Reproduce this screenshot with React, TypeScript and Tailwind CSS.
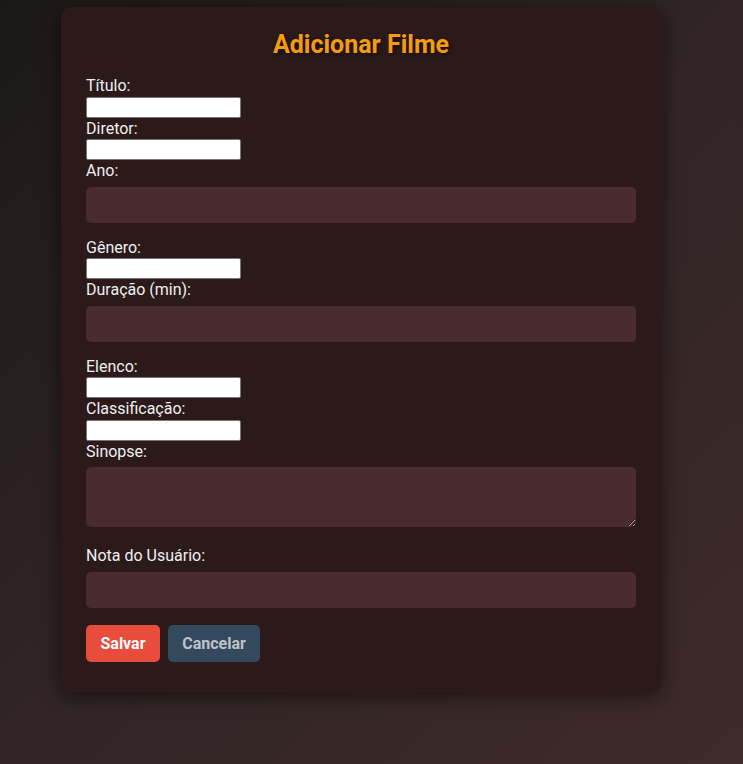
import React from "react";

const font = { fontFamily: "Roboto, 'Noto Sans', sans-serif" };

function Label({ children }: { children: React.ReactNode }) {
  return <label className="block text-[16px] leading-[21.5px] text-[#ecf0f1]">{children}</label>;
}

function PlainInput() {
  return <input type="text" className="block w-[155px] h-[21px] bg-white border border-[#767676] rounded-[2px] text-[13px] text-black outline-none" />;
}

function StyledInput() {
  return <input type="number" className="block w-full h-[36px] mt-[5px] mb-[14px] rounded-[5px] bg-[#4a2c2e] px-[10px] text-[#ecf0f1] outline-none" />;
}

export default function App() {
  return (
    <div style={font} className="min-h-screen bg-[linear-gradient(135deg,#1c1818_0%,#312525_50%,#3f2a2a_100%)] pt-[7px] pb-[20px]">
      <div className="ml-[61px] w-[600px] rounded-[10px] bg-[#2c1a1b] px-[25px] pt-[22px] pb-[30px] shadow-[0_4px_20px_rgba(0,0,0,0.55)]">
        <h2 className="mb-[14px] text-center text-[25px] font-bold leading-[32px] text-[#f39c12] [text-shadow:2px_2px_4px_rgba(0,0,0,0.5)]">
          Adicionar Filme
        </h2>
        <form className="flex flex-col" onSubmit={(e) => e.preventDefault()}>
          <Label>Título:</Label>
          <PlainInput />
          <Label>Diretor:</Label>
          <PlainInput />
          <Label>Ano:</Label>
          <StyledInput />
          <Label>Gênero:</Label>
          <PlainInput />
          <Label>Duração (min):</Label>
          <StyledInput />
          <Label>Elenco:</Label>
          <PlainInput />
          <Label>Classificação:</Label>
          <PlainInput />
          <Label>Sinopse:</Label>
          <textarea className="block w-full h-[60px] mt-[5px] mb-[18px] rounded-[5px] bg-[#4a2c2e] px-[10px] py-[8px] text-[#ecf0f1] outline-none" />
          <Label>Nota do Usuário:</Label>
          <StyledInput />
          <div className="mt-[3.5px] flex gap-[8px]">
            <button type="submit" className="h-[37px] w-[74px] rounded-[5px] bg-[#e74c3c] text-[16px] font-bold text-white">
              Salvar
            </button>
            <button type="button" className="h-[37px] w-[92px] rounded-[5px] bg-[#34495e] text-[16px] font-bold text-[#bdc3c7]">
              Cancelar
            </button>
          </div>
        </form>
      </div>
    </div>
  );
}
